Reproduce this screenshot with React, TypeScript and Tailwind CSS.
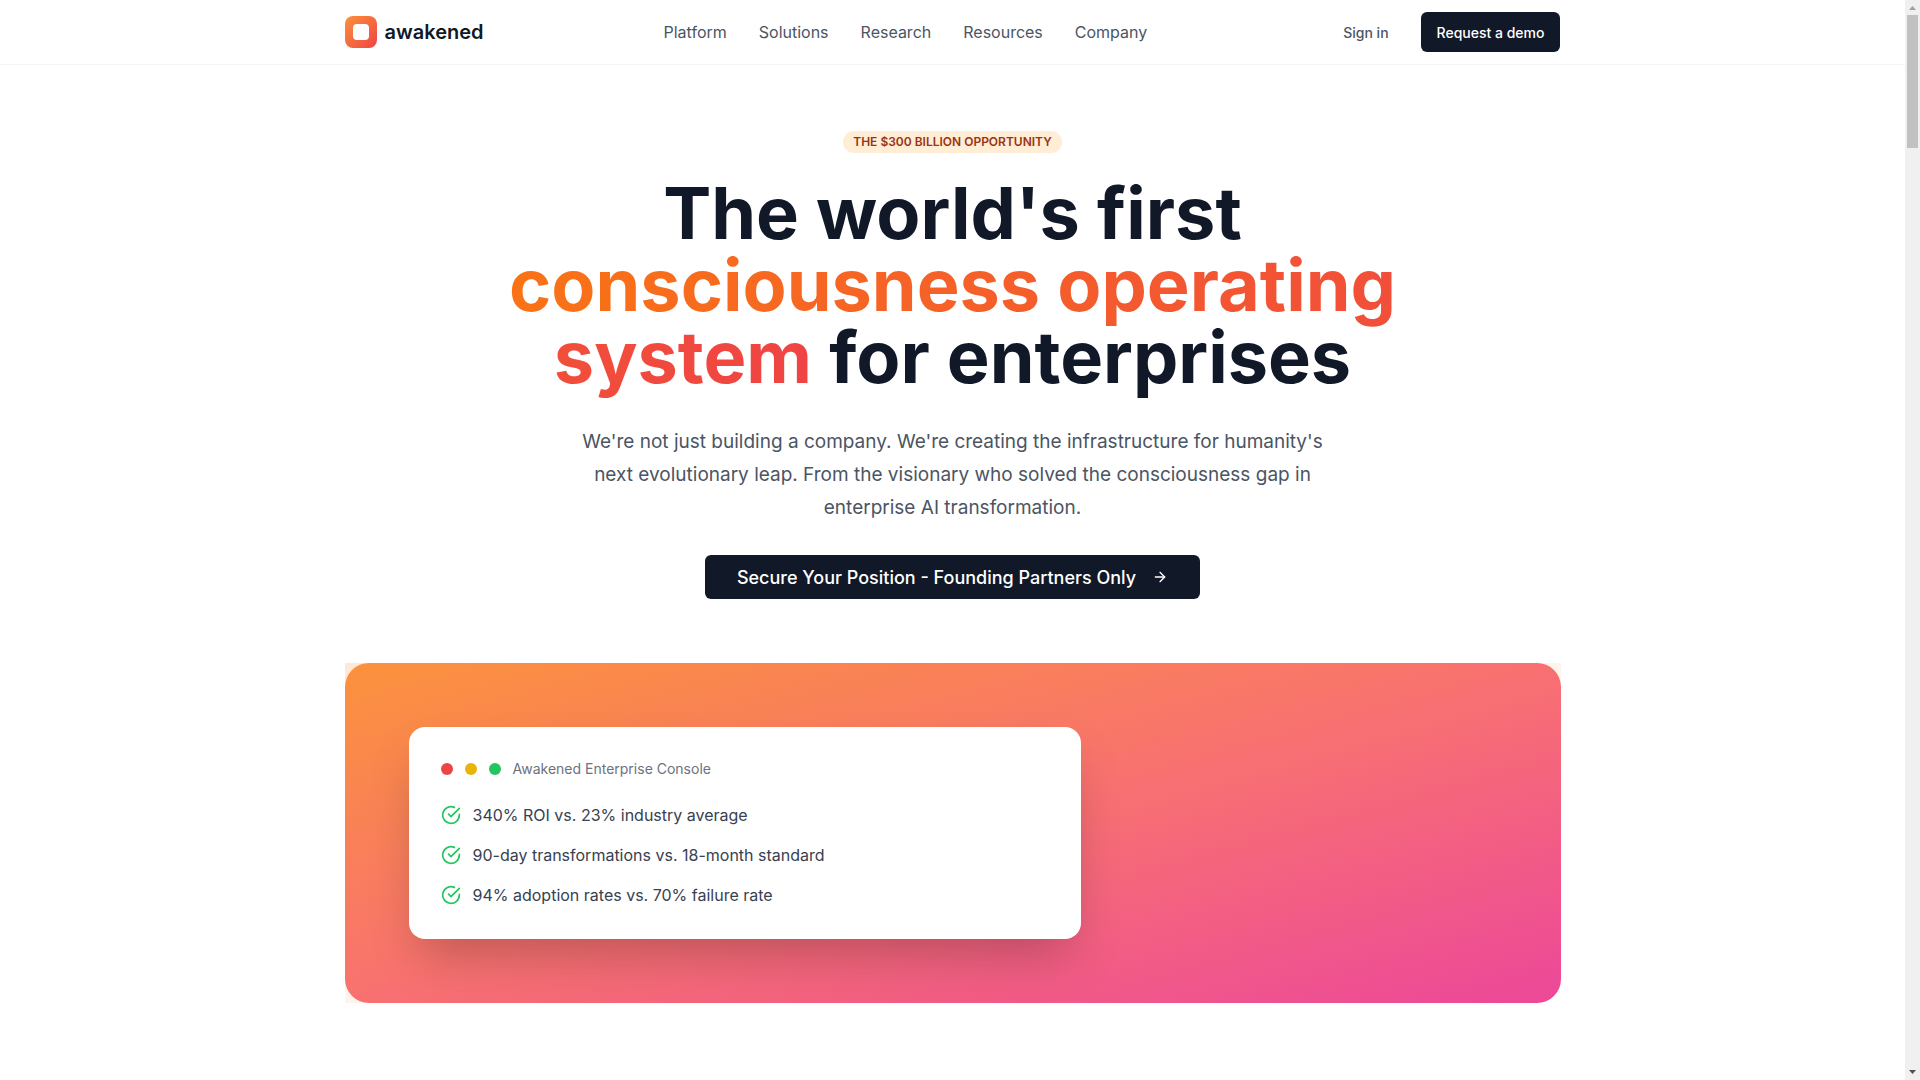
import { ArrowRight } from "lucide-react";

const navLinks = ["Platform", "Solutions", "Research", "Resources", "Company"];

const stats = [
    "340% ROI vs. 23% industry average",
    "90-day transformations vs. 18-month standard",
    "94% adoption rates vs. 70% failure rate",
];

function CheckIcon() {
    return (
        <svg
            className="size-5 shrink-0 text-[#22c55e]"
            viewBox="0 0 24 24"
            fill="none"
            stroke="currentColor"
            strokeWidth="2"
            strokeLinecap="round"
            strokeLinejoin="round"
            aria-hidden="true"
        >
            <path d="M22 11.08V12a10 10 0 1 1-5.93-9.14" />
            <path d="m9 11 3 3L22 4" />
        </svg>
    );
}

function Header() {
    return (
        <header className="border-b border-[#f3f4f6]">
            <div className="mx-auto flex h-16 max-w-7xl items-center justify-between px-8">
                <a href="#" className="flex items-center gap-2">
                    <span className="flex size-8 items-center justify-center rounded-lg bg-linear-to-br/srgb from-[#fb923c] to-[#ef4444]">
                        <span className="size-4 rounded-sm bg-white" />
                    </span>
                    <span className="text-[20px] font-semibold">awakened</span>
                </a>
                <nav className="flex items-center gap-8">
                    {navLinks.map((link) => (
                        <a key={link} href="#" className="text-[16px] text-[#4b5563]">
                            {link}
                        </a>
                    ))}
                </nav>
                <div className="flex items-center gap-4">
                    <a href="#" className="px-4 text-[14px] font-medium text-[#4b5563]">Sign in</a>
                    <button className="h-10 rounded-md bg-[#111827] px-4 text-[14px] font-medium text-white">
                        Request a demo
                    </button>
                </div>
            </div>
        </header>
    );
}

function Hero() {
    return (
        <section className="mx-auto max-w-7xl px-8 py-16">
            <div className="mx-auto flex max-w-4xl flex-col items-center pt-0.5 text-center">
                <span className="mb-6 rounded-full bg-[#ffedd5] px-[10px] py-[3px] text-[12px] leading-4 font-semibold text-[#9a3412]">
                    THE $300 BILLION OPPORTUNITY
                </span>
                <h1 className="mb-8 text-[72px] leading-[72px] font-bold">
                    The world's first{" "}
                    <span className="bg-linear-to-r/srgb from-[#f97316] to-[#ef4444] bg-clip-text text-transparent">
                        consciousness operating system
                    </span>{" "}
                    for enterprises
                </h1>
                <p className="mb-[31px] max-w-3xl text-[19px] leading-[33px] text-[#4b5563]">
                    We're not just building a company. We're creating the infrastructure for humanity's next
                    evolutionary leap. From the visionary who solved the consciousness gap in enterprise AI
                    transformation.
                </p>
                <button className="flex h-11 items-center gap-4 rounded-md bg-[#111827] px-8 text-[18px] font-medium text-white">
                    Secure Your Position - Founding Partners Only
                    <ArrowRight className="size-4" />
                </button>
            </div>

            <div className="mt-16 bg-linear-to-br/srgb from-[#fee9d8] to-white">
                <div className="rounded-3xl bg-linear-to-br/srgb from-[#fb923c] via-[#f87171] to-[#ec4899] p-16">
                    <div className="max-w-2xl rounded-2xl bg-white p-8 shadow-2xl">
                        <div className="mb-6 flex items-center gap-3">
                            <span className="size-3 rounded-full bg-[#ef4444]" />
                            <span className="size-3 rounded-full bg-[#eab308]" />
                            <span className="size-3 rounded-full bg-[#22c55e]" />
                            <span className="text-[14px] leading-5 text-[#6b7280]">Awakened Enterprise Console</span>
                        </div>
                        <ul className="space-y-4">
                            {stats.map((stat) => (
                                <li key={stat} className="flex items-center gap-3 text-[16px] leading-6 text-[#374151]">
                                    <CheckIcon />
                                    {stat}
                                </li>
                            ))}
                        </ul>
                    </div>
                </div>
            </div>
        </section>
    );
}

function ScrollRail() {
    return (
        <div className="flex w-[15px] shrink-0 flex-col items-center justify-between bg-[#f0f0f0]" aria-hidden="true">
            <div className="flex flex-col items-center">
                <svg className="h-[15px] w-[7px]" viewBox="0 0 7 15">
                    <path d="M3.5 6 7 10H0z" fill="#a0a0a0" />
                </svg>
                <div className="h-[133px] w-[11px] bg-[#c1c1c1]" />
            </div>
            <svg className="h-[15px] w-[7px]" viewBox="0 0 7 15">
                <path d="M0 5h7L3.5 9z" fill="#505050" />
            </svg>
        </div>
    );
}

export default function App() {
    return (
        <div className="flex h-screen bg-white font-['Inter',sans-serif] text-[#111827]">
            <main className="min-w-0 flex-1 overflow-hidden">
                <Header />
                <Hero />
            </main>
            <ScrollRail />
        </div>
    );
}
